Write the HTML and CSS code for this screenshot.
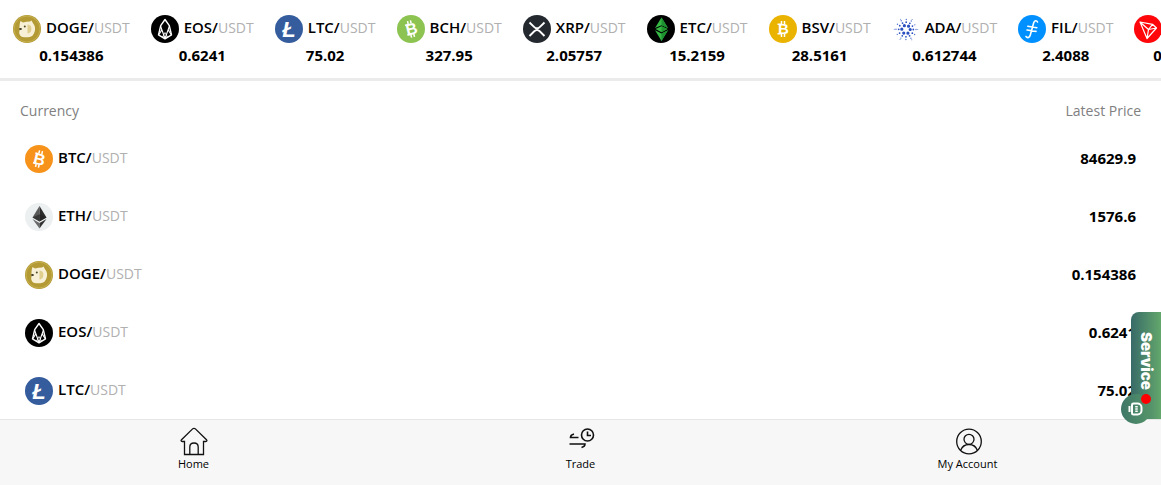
FILE: index.html
```html
<!DOCTYPE html>
<html lang="en">
<head>
  <meta charset="UTF-8">
  <meta name="viewport" content="width=device-width, initial-scale=1.0">
  <title>Home</title>
  <link rel="stylesheet" href="styles.css">
</head>
<body>

<!-- coin logos, reused by the ticker and the list -->
<svg class="sprite" aria-hidden="true">
  <symbol id="doge" viewBox="0 0 28 28">
    <circle cx="14" cy="14" r="14" fill="#b39a35"/>
    <circle cx="14" cy="14" r="13" fill="none" stroke="#c6b04d" stroke-width="1"/>
    <path d="M7.500 6l2.500 1.500 3.500-.7 3.500-.3 1.500-1 1.500 2.700c2 2 2.600 5 1.700 8.300-.9 3.500-3 5.600-6.500 5.800-3.500.2-6.700 0-8-1.800-1.300-2-1.200-3.500-.5-5.500C6.200 12.500 6.500 9 7.500 6z" fill="#f7f0d6"/>
    <path d="M14.500 9.500c3.500.3 4.500 3.200 3.500 6.500-.4 1.300-1.500 2.200-3.500 2.500z" fill="#dfce8e"/>
    <ellipse cx="7.500" cy="14" rx="1.400" ry="1" fill="#3c3620"/>
    <circle cx="11.800" cy="11.500" r="1" fill="#574c28"/>
  </symbol>
  <symbol id="eos" viewBox="0 0 28 28">
    <circle cx="14" cy="14" r="14" fill="#000"/>
    <g fill="none" stroke="#fff" stroke-width="1.400" stroke-linejoin="round">
      <path d="M14 4.500l-4.300 6.200L7.500 19.800l6.500 4 6.500-4-2.200-9.100z"/>
      <path d="M9.700 11.500L14 23.500l4.300-12M8 19.500l2.700-4.500M20 19.500L17.300 15" stroke-width="1.100"/>
      <path d="M11.500 22h5L14 17.500z" stroke-width=".8"/>
    </g>
  </symbol>
  <symbol id="ltc" viewBox="0 0 28 28">
    <circle cx="14" cy="14" r="14" fill="#355d9d"/>
    <text class="coin-mark" x="14" y="22" font-size="22" font-style="italic">Ł</text>
  </symbol>
  <symbol id="bch" viewBox="0 0 28 28">
    <circle cx="14" cy="14" r="14" fill="#8dc351"/>
    <g transform="rotate(-14 14 14)">
      <path d="M12.500 5.500v3M15.500 5.500v3M12.500 19.500v3M15.500 19.500v3M9 9h3M9 19h3" stroke="#fff" stroke-width="1.500"/>
      <text class="coin-mark" x="14.500" y="19.600" font-size="16">B</text>
    </g>
  </symbol>
  <symbol id="btc" viewBox="0 0 28 28">
    <circle cx="14" cy="14" r="14" fill="#f7931a"/>
    <g transform="rotate(14 14 14)">
      <path d="M12.500 5.500v3M15.500 5.500v3M12.500 19.500v3M15.500 19.500v3M9 9h3M9 19h3" stroke="#fff" stroke-width="1.500"/>
      <text class="coin-mark" x="14.500" y="19.600" font-size="16">B</text>
    </g>
  </symbol>
  <symbol id="bsv" viewBox="0 0 28 28">
    <circle cx="14" cy="14" r="14" fill="#eab300"/>
    <path d="M12.500 6v3M15.500 6v3M12.500 19v3M15.500 19v3M8.500 9.300h3.500M8.500 18.700h3.500" stroke="#fff" stroke-width="1.500"/>
    <text class="coin-mark" x="14.500" y="19.400" font-size="15">B</text>
  </symbol>
  <symbol id="xrp" viewBox="0 0 28 28">
    <circle cx="14" cy="14" r="14" fill="#23292f"/>
    <path d="M6.500 7.500l4.800 4.600c1.600 1.500 3.800 1.500 5.400 0l4.800-4.600M6.500 21l4.800-4.700c1.600-1.500 3.800-1.500 5.400 0l4.800 4.700" fill="none" stroke="#fff" stroke-width="1.900"/>
  </symbol>
  <symbol id="etc" viewBox="0 0 28 28">
    <circle cx="14" cy="14" r="14" fill="#000"/>
    <path d="M14.500 2.500L8 13l6.500-2.800L21 13z" fill="#35b944"/>
    <path d="M14.500 2.500v7.700L21 13z" fill="#1d9030"/>
    <path d="M14.500 11.200L8.500 14l6 3.200 6-3.200z" fill="#38b945"/>
    <path d="M14.500 11.200v6l6-3.200z" fill="#1f952e"/>
    <path d="M8 15.200l6.500 3.300 6.500-3.300-6.500 10.800z" fill="#35b944"/>
    <path d="M14.500 18.500V26L21 15.200z" fill="#1d9030"/>
  </symbol>
  <symbol id="ada" viewBox="0 0 28 28">
    <g fill="none" stroke="#2a4fc0" stroke-linecap="round">
      <circle cx="14" cy="14.500" r="4.200" stroke-width="3.200" stroke-dasharray="0 4.398"/>
      <circle cx="14" cy="14.500" r="7.300" stroke-width="1.800" stroke-dasharray="0 3.822"/>
      <circle cx="14" cy="14.500" r="10" stroke-width="1.400" stroke-dasharray="0 5.236" opacity=".8"/>
      <circle cx="14" cy="14.500" r="11.700" stroke-width="1.100" stroke-dasharray="0 12.252" opacity=".7"/>
    </g>
  </symbol>
  <symbol id="fil" viewBox="0 0 28 28">
    <circle cx="14" cy="14" r="14" fill="#0090ff"/>
    <path d="M19.500 7c-.8-1.800-3-1.600-3.800.7L12.300 20c-.7 2.700-3 3.400-4.300 1.500M9.800 11.300l9 1.400M9 15l9 1.400" fill="none" stroke="#fff" stroke-width="1.600" stroke-linecap="round"/>
  </symbol>
  <symbol id="trx" viewBox="0 0 28 28">
    <circle cx="14" cy="14" r="14" fill="#ff060a"/>
    <path d="M6 7l12.500 2.300 4 3.700L13 23.500zM6 7l8.500 7.500L13 23.500M14.500 14.500l8-1.500M14.500 14.500l4-5.200" fill="none" stroke="#fff" stroke-width="1.200" stroke-linejoin="round"/>
  </symbol>
  <symbol id="eth" viewBox="0 0 28 28">
    <circle cx="14" cy="14" r="14" fill="#ecf0f1"/>
    <path d="M14.500 3L7.500 14.500l7 4z" fill="#5a5a5a"/>
    <path d="M14.500 3v15.500l7-4z" fill="#2b2b2b"/>
    <path d="M14.500 11.300l-7 3.200 7 4 7-4z" fill="#222" opacity=".6"/>
    <path d="M7.500 16l7 4v5.500z" fill="#6a6a6a"/>
    <path d="M21.500 16l-7 4v5.500z" fill="#333"/>
  </symbol>
</svg>

<section class="ticker">
  <div class="ticker-item">
    <div class="pair"><svg class="coin"><use href="#doge"/></svg><span class="name"><b>DOGE/</b>USDT</span></div>
    <div class="price">0.154386</div>
  </div>
  <div class="ticker-item">
    <div class="pair"><svg class="coin"><use href="#eos"/></svg><span class="name"><b>EOS/</b>USDT</span></div>
    <div class="price">0.6241</div>
  </div>
  <div class="ticker-item">
    <div class="pair"><svg class="coin"><use href="#ltc"/></svg><span class="name"><b>LTC/</b>USDT</span></div>
    <div class="price">75.02</div>
  </div>
  <div class="ticker-item">
    <div class="pair"><svg class="coin"><use href="#bch"/></svg><span class="name"><b>BCH/</b>USDT</span></div>
    <div class="price">327.95</div>
  </div>
  <div class="ticker-item">
    <div class="pair"><svg class="coin"><use href="#xrp"/></svg><span class="name"><b>XRP/</b>USDT</span></div>
    <div class="price">2.05757</div>
  </div>
  <div class="ticker-item">
    <div class="pair"><svg class="coin"><use href="#etc"/></svg><span class="name"><b>ETC/</b>USDT</span></div>
    <div class="price">15.2159</div>
  </div>
  <div class="ticker-item">
    <div class="pair"><svg class="coin"><use href="#bsv"/></svg><span class="name"><b>BSV/</b>USDT</span></div>
    <div class="price">28.5161</div>
  </div>
  <div class="ticker-item">
    <div class="pair"><svg class="coin"><use href="#ada"/></svg><span class="name"><b>ADA/</b>USDT</span></div>
    <div class="price">0.612744</div>
  </div>
  <div class="ticker-item">
    <div class="pair"><svg class="coin"><use href="#fil"/></svg><span class="name"><b>FIL/</b>USDT</span></div>
    <div class="price">2.4088</div>
  </div>
  <div class="ticker-item">
    <div class="pair"><svg class="coin"><use href="#trx"/></svg><span class="name"><b>TRX/</b>USDT</span></div>
    <div class="price">0.243912</div>
  </div>
</section>

<table class="market">
  <thead>
    <tr><th>Currency</th><th>Latest Price</th></tr>
  </thead>
  <tbody>
    <tr>
      <td><div class="pair"><svg class="coin"><use href="#btc"/></svg><span class="name"><b>BTC/</b>USDT</span></div></td>
      <td class="price">84629.9</td>
    </tr>
    <tr>
      <td><div class="pair"><svg class="coin"><use href="#eth"/></svg><span class="name"><b>ETH/</b>USDT</span></div></td>
      <td class="price">1576.6</td>
    </tr>
    <tr>
      <td><div class="pair"><svg class="coin"><use href="#doge"/></svg><span class="name"><b>DOGE/</b>USDT</span></div></td>
      <td class="price">0.154386</td>
    </tr>
    <tr>
      <td><div class="pair"><svg class="coin"><use href="#eos"/></svg><span class="name"><b>EOS/</b>USDT</span></div></td>
      <td class="price">0.6241</td>
    </tr>
    <tr>
      <td><div class="pair"><svg class="coin"><use href="#ltc"/></svg><span class="name"><b>LTC/</b>USDT</span></div></td>
      <td class="price">75.02</td>
    </tr>
  </tbody>
</table>

<nav class="tabbar">
  <a href="#home">
    <svg viewBox="0 0 30 30">
      <path d="M5.500 15.500H3.200c-1.200 0-1.500-1-.7-1.800L13.600 2.900c.8-.8 2-.8 2.800 0l11.100 10.800c.8.800.5 1.800-.7 1.800h-2.300V28.500h-19zM10.800 28.500V21c0-2.300 1.800-4 4.200-4s4.200 1.700 4.200 4v7.500"/>
    </svg>
    Home
  </a>
  <a href="#trade">
    <svg viewBox="0 0 30 30">
      <g stroke-width="1.600">
        <circle cx="21.500" cy="9" r="6"/>
        <path d="M21.500 5.500v4h3.500M12.500 11.500H4.500c0-1.500 1.500-3 3.500-3.500M3.500 18h15.500c0 1.500-1.500 3-3.500 3.500"/>
      </g>
    </svg>
    Trade
  </a>
  <a href="#account">
    <svg viewBox="0 0 30 30">
      <circle cx="16" cy="15.500" r="12.300"/>
      <circle cx="16" cy="13.300" r="5"/>
      <path d="M7.500 24.500c1.500-4 4.500-6 8.500-6s7 2 8.500 6"/>
    </svg>
    My Account
  </a>
</nav>

<button class="service" type="button">
  <span class="service-label">Service</span>
  <span class="service-chat">
    <svg viewBox="0 0 18 18">
      <path d="M6.500 3.500h4a4 4 0 0 1 4 4v3a4 4 0 0 1-4 4h-4a1.500 1.500 0 0 1-1.500-1.500V5a1.500 1.500 0 0 1 1.500-1.500z" fill="none" stroke="#fff" stroke-width="2"/>
      <path d="M2.500 6v6" stroke="#fff" stroke-width="2"/>
      <path d="M9.500 6v6" stroke="#fff" stroke-width="2.500" stroke-dasharray="1.500 .75"/>
    </svg>
    <i class="service-dot"></i>
  </span>
</button>

</body>
</html>
```

FILE: styles.css
```css
body {
  margin: 0;
  background-color: #fff;
  color: #000;
  font-family: "Open Sans", "Noto Sans", sans-serif;
  font-size: 15px;
  line-height: 20px;
}

.sprite {
  display: none;
}

.coin-mark {
  fill: #fff;
  font-family: "Liberation Sans", Arial, sans-serif;
  font-weight: bold;
  text-anchor: middle;
}

.ticker {
  display: flex;
  gap: 21px;
  padding: 15px 0 13px 13px;
  border-bottom: 3px solid #ebebeb;
  overflow: hidden;
}

.ticker-item {
  flex: none;
  text-align: center;
}

.ticker-item .price {
  margin-top: 2px;
}

.pair {
  display: flex;
  align-items: center;
  gap: 5px;
}

.coin {
  flex: none;
  width: 28px;
  height: 28px;
}

.name {
  color: #b0b0b0;
  font-size: 14px;
  padding-bottom: 4px;
}

.name b {
  color: #000;
  font-size: 15px;
  font-weight: 600;
}

.price {
  font-weight: 700;
}

.market {
  width: 100%;
  border-collapse: collapse;
  margin-bottom: 66px;
}

.market th {
  padding: 20px 20px 9px;
  color: #808080;
  font-size: 14px;
  font-weight: 400;
  text-align: left;
}

.market td {
  height: 58px;
  padding: 0 25px;
}

.market td.price {
  height: 56px;
  padding-bottom: 2px;
}

.market th:last-child,
.market td:last-child {
  text-align: right;
}

.tabbar {
  position: fixed;
  left: 0;
  right: 0;
  bottom: 0;
  display: flex;
  height: 65px;
  border-top: 1px solid #e6e6e6;
  background-color: #f7f7f7;
}

.tabbar a {
  flex: 1;
  display: flex;
  flex-direction: column;
  align-items: center;
  padding-top: 6px;
  color: #000;
  font-size: 11px;
  line-height: 16px;
  text-decoration: none;
}

.tabbar svg {
  width: 30px;
  height: 30px;
  fill: none;
  stroke: #111;
  stroke-width: 1.3;
}

/* floating support button */
.service {
  position: fixed;
  right: 0;
  bottom: 66px;
  width: 30px;
  height: 107px;
  padding: 20px 0 0;
  border: 0;
  border-radius: 8px 0 0 0;
  background: linear-gradient(to right, #386a68, #63a76c);
  color: #fff;
  display: flex;
  justify-content: center;
  align-items: flex-start;
  cursor: pointer;
}

.service-label {
  font: 900 15px/20px Inter, "Liberation Sans", sans-serif;
  writing-mode: vertical-rl;
}

.service-chat {
  position: absolute;
  left: -10px;
  bottom: -5px;
  display: flex;
  justify-content: center;
  align-items: center;
  width: 30px;
  height: 30px;
  border-radius: 50%;
  background: linear-gradient(to right, #3f7768, #559569);
}

.service-chat svg {
  width: 18px;
  height: 18px;
}

.service-dot {
  position: absolute;
  top: 0;
  right: 0;
  width: 10px;
  height: 10px;
  border-radius: 50%;
  background-color: #f00;
}
```
